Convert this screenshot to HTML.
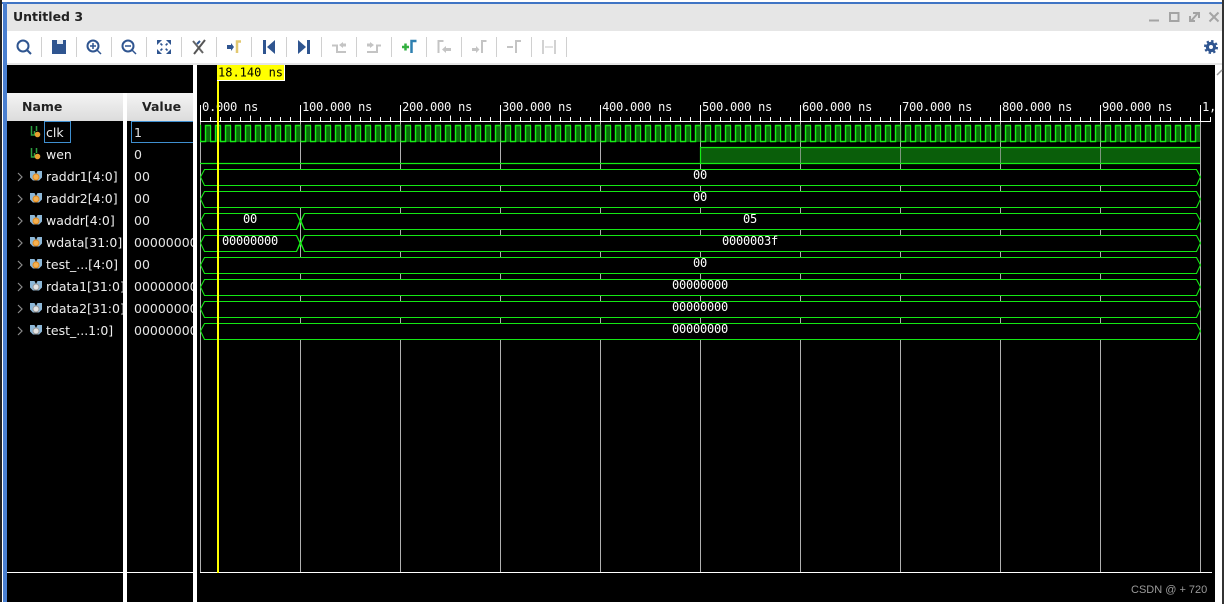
<!DOCTYPE html>
<html><head><meta charset="utf-8"><style>
html,body{margin:0;padding:0;background:#fff}
body{width:1224px;height:604px;position:relative;overflow:hidden;font-family:"DejaVu Sans","Liberation Sans",sans-serif}
div{position:absolute;box-sizing:border-box}
.n{left:46px;color:#eee;font-size:12.5px;line-height:22px;height:22px;white-space:nowrap}
.v{left:134px;width:59px;overflow:hidden;color:#e4e4e4;font-size:12.5px;line-height:22px;height:22px;white-space:nowrap}
</style></head><body>
<div style="left:0;top:0;width:1224px;height:604px;background:#fff"></div>
<div style="left:0;top:0;width:2px;height:602px;background:#222"></div>
<div style="left:2px;top:2px;width:1220px;height:2px;background:#3f74c4"></div>
<div style="left:3px;top:2px;width:4px;height:600px;background:#4a7fd0"></div>
<div style="left:7px;top:4px;width:1215px;height:27px;background:#e6e6e6"></div>
<div style="left:13px;top:7px;font-size:12.5px;font-weight:bold;line-height:19px;color:#222">Untitled 3</div>
<div style="left:7px;top:63px;width:1215px;height:2px;background:#e6e6e6"></div>
<div style="left:1222px;top:0;width:2px;height:604px;background:#333"></div>
<div style="left:7px;top:65px;width:186px;height:537px;background:#000"></div>
<div style="left:197px;top:65px;width:1018px;height:537px;background:#000"></div>
<div style="left:123px;top:93px;width:4px;height:509px;background:#fff"></div>
<div style="left:193px;top:65px;width:4px;height:537px;background:#fff"></div>
<div style="left:7px;top:93px;width:116px;height:28px;background:linear-gradient(#f4f4f4,#dcdcdc);font-weight:bold;font-size:12.5px;line-height:27px;padding-left:15px;color:#222">Name</div>
<div style="left:127px;top:93px;width:66px;height:28px;background:linear-gradient(#f4f4f4,#dcdcdc);font-weight:bold;font-size:12.5px;line-height:27px;padding-left:15px;color:#222">Value</div>
<div style="left:44px;top:121px;width:27px;height:22px;border:1px solid #3f8fd0"></div>
<div style="left:131px;top:121px;width:62px;height:22px;border:1px solid #3f8fd0;border-right:0"></div>
<div class="n" style="top:122px">clk</div><div class="v" style="top:122px">1</div>
<div class="n" style="top:144px">wen</div><div class="v" style="top:144px">0</div>
<div class="n" style="top:166px">raddr1[4:0]</div><div class="v" style="top:166px">00</div>
<div class="n" style="top:188px">raddr2[4:0]</div><div class="v" style="top:188px">00</div>
<div class="n" style="top:210px">waddr[4:0]</div><div class="v" style="top:210px">00</div>
<div class="n" style="top:232px">wdata[31:0]</div><div class="v" style="top:232px">00000000</div>
<div class="n" style="top:254px">test_...[4:0]</div><div class="v" style="top:254px">00</div>
<div class="n" style="top:276px;width:77px;overflow:hidden">rdata1[31:0]</div><div class="v" style="top:276px">00000000</div>
<div class="n" style="top:298px;width:77px;overflow:hidden">rdata2[31:0]</div><div class="v" style="top:298px">00000000</div>
<div class="n" style="top:320px">test_...1:0]</div><div class="v" style="top:320px">00000000</div>

<svg style="position:absolute;left:0;top:0" width="1224" height="604" viewBox="0 0 1224 604">
<defs>
<pattern id="tk" x="200" y="117" width="10" height="4" patternUnits="userSpaceOnUse"><rect x="0" y="0" width="1" height="4" fill="#fff"/></pattern>
<pattern id="ck" x="200" y="124" width="10" height="19" patternUnits="userSpaceOnUse">
<rect x="5" y="1" width="5" height="17" fill="#0a6e0a"/>
<path d="M0 17.5H5.5V1.500H10M.5 1.500V17.500M0 1.500H1" fill="none" stroke="#14ee14" stroke-width="1.400"/>
</pattern>
<g id="arrow"><path d="M0 0l4 4-4 4" fill="none" stroke="#8a8a8a" stroke-width="1.200"/></g>
<g id="bi"><path d="M0 0h4.500l1.500 3 1.500-3h4.500v6.500l-3 3h-6l-3-3z" fill="#8db8d8"/></g>
</defs>
<g stroke="#b0b0b0" stroke-width="1">
<path d="M200.5 121V572M300.5 121V572M400.5 121V572M500.5 121V572M600.5 121V572M700.5 121V572M800.5 121V572M900.5 121V572M1000.5 121V572M1100.5 121V572M1200.5 121V572"/>
</g>
<rect x="200" y="117" width="1011" height="4" fill="url(#tk)"/>
<path d="M250.5 115.500V121M350.5 115.500V121M450.5 115.500V121M550.5 115.500V121M650.5 115.500V121M750.5 115.500V121M850.5 115.500V121M950.5 115.500V121M1050.5 115.500V121M1150.5 115.500V121" stroke="#fff"/>
<g fill="none" stroke="#fff">
<path d="M200 121.5H1211"/>
<path d="M200.5 105V121M300.5 105V121M400.5 105V121M500.5 105V121M600.5 105V121M700.5 105V121M800.5 105V121M900.5 105V121M1000.5 105V121M1100.5 105V121M1200.5 105V121"/>
</g>
<g font-family="DejaVu Sans Mono,Liberation Mono,monospace" font-size="12.2" letter-spacing="-.34" fill="#f4f4f4">
<text x="202" y="111">0.000 ns</text>
<text x="302" y="111">100.000 ns</text><text x="402" y="111">200.000 ns</text><text x="502" y="111">300.000 ns</text><text x="602" y="111">400.000 ns</text><text x="702" y="111">500.000 ns</text><text x="802" y="111">600.000 ns</text><text x="902" y="111">700.000 ns</text><text x="1002" y="111">800.000 ns</text><text x="1102" y="111">900.000 ns</text><text x="1202" y="111">1,</text>
</g>
<rect x="200" y="124" width="1000" height="19" fill="url(#ck)"/>
<path d="M300.5 125V142M400.5 125V142M500.5 125V142M600.5 125V142M700.5 125V142M800.5 125V142M900.5 125V142M1000.5 125V142M1100.5 125V142M1200.5 125V142" stroke="#b0b0b0" opacity=".5"/>
<rect x="701" y="148" width="499" height="15" fill="#0a5e0a"/>
<path d="M800.5 148V163M900.5 148V163M1000.5 148V163M1100.5 148V163" stroke="#b0b0b0" opacity=".7"/>
<path d="M200 163.5H700.5V147.5H1200M700.5 163.5H1200" fill="none" stroke="#14ee14" stroke-width="1.200"/>
<g fill="#000" stroke="#14e814" stroke-width="1.100">
<path d="M204.5 169.500H1196.500L1200.500 177 1196.500 185.500H204.500L200.500 177Z"/>
<path d="M204.5 191.500H1196.500L1200.500 199 1196.500 207.500H204.500L200.500 199Z"/>
<path d="M204.5 213.500H296.500L300 221 296.500 229.500H204.500L200.500 221Z"/>
<path d="M304.5 213.500H1196.500L1200.500 221 1196.500 229.500H304.500L301 221Z"/>
<path d="M204.5 235.500H296.500L300 243 296.500 251.500H204.500L200.500 243Z"/>
<path d="M304.5 235.500H1196.500L1200.500 243 1196.500 251.500H304.500L301 243Z"/>
<path d="M204.5 257.500H1196.500L1200.500 265 1196.500 273.500H204.500L200.500 265Z"/>
<path d="M204.5 279.500H1196.500L1200.500 287 1196.500 295.500H204.500L200.500 287Z"/>
<path d="M204.5 301.500H1196.500L1200.500 309 1196.500 317.500H204.500L200.500 309Z"/>
<path d="M204.5 323.500H1196.500L1200.500 331 1196.500 339.500H204.500L200.500 331Z"/>
<path d="M296.5 213.500L304.500 229.500M304.500 213.500L296.500 229.500M296.500 235.500L304.500 251.500M304.500 235.500L296.500 251.500" fill="none"/>
</g>
<g font-family="DejaVu Sans Mono,Liberation Mono,monospace" font-size="12" letter-spacing="-.22" fill="#fff" text-anchor="middle">
<text x="700" y="179">00</text><text x="700" y="201">00</text><text x="250" y="223">00</text><text x="750" y="223">05</text>
<text x="250" y="245">00000000</text><text x="750" y="245">0000003f</text><text x="700" y="267">00</text>
<text x="700" y="289">00000000</text><text x="700" y="311">00000000</text><text x="700" y="333">00000000</text>
</g>
<path d="M7 572.5H123M127 572.5H193M200 572.5H1212" stroke="#fff"/>
<rect x="217" y="65" width="2" height="508" fill="#ff0"/>
<rect x="217" y="65" width="68" height="16" fill="#fff"/>
<rect x="217" y="65" width="67" height="15" fill="#ff0"/>
<text x="218" y="76.500" font-family="DejaVu Sans Mono,Liberation Mono,monospace" font-size="12" fill="#000">18.140 ns</text>
<path d="M1217 75l5-5" stroke="#999" stroke-width="1.500"/>
<g fill="none" stroke="#2da040" stroke-width="1.500"><path d="M31.500 126v9h3v-4M36.500 126v5"/><path d="M31.500 148v9h3v-4M36.500 148v5"/></g>
<circle cx="37.500" cy="134.500" r="2.800" fill="#e8a030"/><circle cx="37.500" cy="156.500" r="2.800" fill="#e8a030"/>
<use href="#arrow" x="18" y="173"/><use href="#arrow" x="18" y="195"/><use href="#arrow" x="18" y="217"/><use href="#arrow" x="18" y="239"/><use href="#arrow" x="18" y="261"/><use href="#arrow" x="18" y="283"/><use href="#arrow" x="18" y="305"/><use href="#arrow" x="18" y="327"/>
<use href="#bi" x="30" y="171"/><use href="#bi" x="30" y="193"/><use href="#bi" x="30" y="215"/><use href="#bi" x="30" y="237"/><use href="#bi" x="30" y="259"/><use href="#bi" x="30" y="281"/><use href="#bi" x="30" y="303"/><use href="#bi" x="30" y="325"/>
<g fill="#f5b050" stroke="#e08a20"><circle cx="36" cy="177" r="3"/><circle cx="36" cy="199" r="3"/><circle cx="36" cy="221" r="3"/><circle cx="36" cy="243" r="3"/><circle cx="36" cy="265" r="3"/></g>
<g fill="#e4e4e4" stroke="#999"><circle cx="36" cy="287" r="3"/><circle cx="36" cy="309" r="3"/><circle cx="36" cy="331" r="3"/></g>
<g stroke="#d0d0d0"><path d="M41.500 37v20M76.500 37v20M111.500 37v20M146.500 37v20M181.500 37v20M216.500 37v20M251.500 37v20M286.500 37v20M321.500 37v20M356.500 37v20M391.500 37v20M426.500 37v20M461.500 37v20M496.500 37v20M531.500 37v20M566.500 37v20"/></g>
<g fill="none" stroke="#2f5590" stroke-width="2">
<circle cx="23" cy="46" r="5.500"/><path d="M27 50l4 4"/>
<circle cx="93" cy="46" r="5.500"/><path d="M97 50l4 4M90 46h6M93 43v6" stroke-width="1.500"/>
<circle cx="128" cy="46" r="5.500"/><path d="M132 50l4 4M125 46h6" stroke-width="1.500"/>
</g>
<path d="M157 40h5l-5 5zM171 40h-5l5 5zM157 54h5l-5-5zM171 54h-5l5-5z" fill="#2f5590"/>
<path d="M160.500 43.500l1.800 1.800M167.500 43.500l-1.800 1.800M160.500 50.500l1.800-1.800M167.500 50.500l-1.800-1.800" stroke="#2f5590" stroke-width="1.600"/>
<path d="M52 40h14v14H52z" fill="#2f5590"/><path d="M57 40h6v4h-6z" fill="#e6ecf4"/>
<path d="M193 41l10 12" stroke="#666" stroke-width="2" fill="none"/><path d="M205 40l-11 14" stroke="#555" stroke-width="2" fill="none"/><path d="M200 41l-3 3" stroke="#2f5590" stroke-width="2"/>
<path d="M227 45h4v-2l3 4-3 4v-2h-4z" fill="#2f5590"/><path d="M237 53V41.500h4" fill="none" stroke="#e2c870" stroke-width="2.500"/>
<path d="M263 40h3v14h-3zM275 40v14l-8-7z" fill="#2f5590"/>
<path d="M307 40h3v14h-3zM298 40v14l8-7z" fill="#2f5590"/>
<g fill="none" stroke="#c4c4c4" stroke-width="2">
<path d="M332 45.500h5v6.500h9"/><path d="M367 52h10v-6.500h4"/>
<path d="M438.500 53V41h5"/><path d="M482 53V41h4.500"/><path d="M507 47h6M516 53V41h5"/>
<path d="M543 40v14M555 40v14" stroke-width="1.500"/><path d="M545 47h8" stroke-width="1"/>
</g>
<path d="M339 45l4-3v1.500h3v3h-3V48z" fill="#c4c4c4"/>
<path d="M367 43.500h3V42l4 3-4 3v-1.500h-3z" fill="#c4c4c4"/>
<path d="M442 49.500l4-3.500v2h5v3h-5v2z" fill="#c4c4c4"/><path d="M472 48h4v-2l3.500 3.500L476 53v-2h-4z" fill="#c4c4c4"/>
<path d="M402 47h7M405.500 43.500v7" stroke="#33b040" stroke-width="2.500"/>
<path d="M411.500 53V41h5" fill="none" stroke="#2f80b0" stroke-width="2.500"/>
<circle cx="1211" cy="47" r="3.600" fill="none" stroke="#2f5590" stroke-width="3.200"/>
<circle cx="1211" cy="47" r="6" fill="none" stroke="#2f5590" stroke-width="2" stroke-dasharray="2.360 2.350"/>
<g fill="none" stroke="#a4a4a4" stroke-width="2"><path d="M1149 20.500h10"/><rect x="1170" y="13" width="8.500" height="8"/>
<path d="M1190 16v5h5M1191 21l7-8M1193 13h6v5"/><path d="M1209.500 12.500l9 9M1218.500 12.500l-9 9"/></g>
</svg>
<div style="left:1131px;top:583px;font-family:'Liberation Sans',sans-serif;font-size:11px;line-height:13px;color:#9a9a9a;margin-top:0.5px">CSDN @ + 720</div>
</body></html>
